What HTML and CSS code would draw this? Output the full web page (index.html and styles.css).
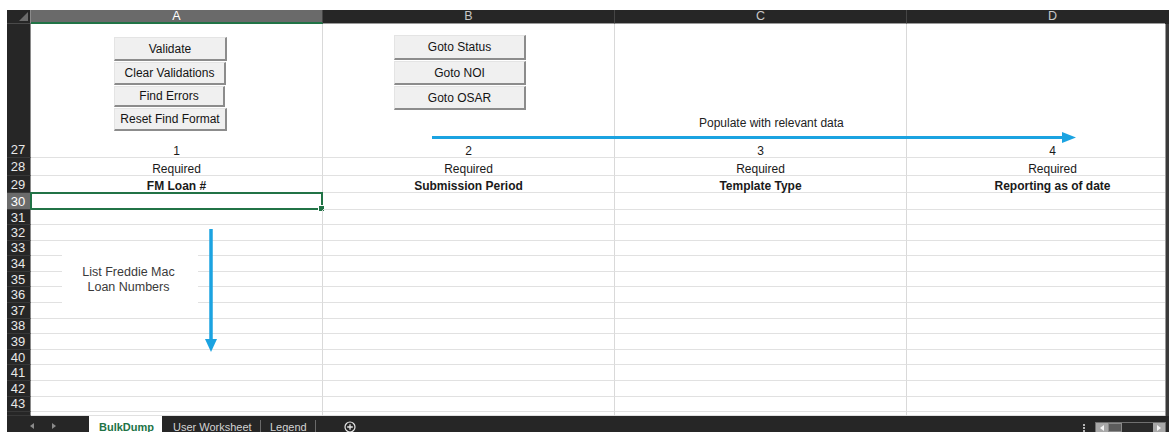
FILE: index.html
```html
<!DOCTYPE html>
<html lang="en">
<head>
<meta charset="utf-8">
<title>BulkDump</title>
<link rel="stylesheet" href="styles.css">
</head>
<body>
<div class="window">
  <div class="sheet">
    <div class="grid">
      <div class="row row-head">
        <div class="corner"><span class="corner-tri"></span></div>
        <div class="colhdr is-sel">A</div>
        <div class="colhdr">B</div>
        <div class="colhdr">C</div>
        <div class="colhdr">D</div>
      </div>

      <div class="row row-27">
        <div class="rowhdr rowhdr-tall">27</div>
        <div class="cell cell-tall">
          <div class="btn-stack stack-a">
            <button class="btn b-24 w-113">Validate</button>
            <button class="btn b-23 w-112">Clear Validations</button>
            <button class="btn b-21 w-111">Find Errors</button>
            <button class="btn b-23 w-113">Reset Find Format</button>
          </div>
          <span class="num">1</span>
        </div>
        <div class="cell cell-tall">
          <div class="btn-stack stack-b">
            <button class="btn b-25 w-132">Goto Status</button>
            <button class="btn b-24 w-132">Goto NOI</button>
            <button class="btn b-24 w-132">Goto OSAR</button>
          </div>
          <span class="num">2</span>
        </div>
        <div class="cell cell-tall"><span class="num">3</span></div>
        <div class="cell cell-tall"><span class="num">4</span></div>
      </div>

      <div class="row h18">
        <div class="rowhdr">28</div>
        <div class="cell">Required</div>
        <div class="cell">Required</div>
        <div class="cell">Required</div>
        <div class="cell">Required</div>
      </div>
      <div class="row h17">
        <div class="rowhdr">29</div>
        <div class="cell bold">FM Loan #</div>
        <div class="cell bold">Submission Period</div>
        <div class="cell bold">Template Type</div>
        <div class="cell bold">Reporting as of date</div>
      </div>
      <div class="row h17">
        <div class="rowhdr is-sel">30</div>
        <div class="cell active"></div>
        <div class="cell"></div>
        <div class="cell"></div>
        <div class="cell"></div>
      </div>
      <div class="row h15">
        <div class="rowhdr">31</div>
        <div class="cell"></div><div class="cell"></div><div class="cell"></div><div class="cell"></div>
      </div>
      <div class="row h156"><div class="rowhdr">32</div><div class="cell"></div><div class="cell"></div><div class="cell"></div><div class="cell"></div></div>
      <div class="row h156"><div class="rowhdr">33</div><div class="cell"></div><div class="cell"></div><div class="cell"></div><div class="cell"></div></div>
      <div class="row h156"><div class="rowhdr">34</div><div class="cell"></div><div class="cell"></div><div class="cell"></div><div class="cell"></div></div>
      <div class="row h156"><div class="rowhdr">35</div><div class="cell"></div><div class="cell"></div><div class="cell"></div><div class="cell"></div></div>
      <div class="row h156"><div class="rowhdr">36</div><div class="cell"></div><div class="cell"></div><div class="cell"></div><div class="cell"></div></div>
      <div class="row h156"><div class="rowhdr">37</div><div class="cell"></div><div class="cell"></div><div class="cell"></div><div class="cell"></div></div>
      <div class="row h156"><div class="rowhdr">38</div><div class="cell"></div><div class="cell"></div><div class="cell"></div><div class="cell"></div></div>
      <div class="row h156"><div class="rowhdr">39</div><div class="cell"></div><div class="cell"></div><div class="cell"></div><div class="cell"></div></div>
      <div class="row h156"><div class="rowhdr">40</div><div class="cell"></div><div class="cell"></div><div class="cell"></div><div class="cell"></div></div>
      <div class="row h156"><div class="rowhdr">41</div><div class="cell"></div><div class="cell"></div><div class="cell"></div><div class="cell"></div></div>
      <div class="row h156"><div class="rowhdr">42</div><div class="cell"></div><div class="cell"></div><div class="cell"></div><div class="cell"></div></div>
      <div class="row h156"><div class="rowhdr">43</div><div class="cell"></div><div class="cell"></div><div class="cell"></div><div class="cell"></div></div>
      <div class="row h-rest"><div class="rowhdr"></div><div class="cell"></div><div class="cell"></div><div class="cell"></div><div class="cell"></div></div>
    </div>
    <div class="vscroll"><div class="vscroll-track"></div></div>
  </div>

  <div class="tabbar">
    <div class="tab-nav">
      <span class="nav-l"></span>
      <span class="nav-r"></span>
    </div>
    <div class="tab tab-active">BulkDump</div>
    <div class="tab tab-ws">User Worksheet</div>
    <div class="tab tab-legend">Legend</div>
    <div class="tab-add">
      <svg width="12" height="12" viewBox="0 0 12 12"><circle cx="6" cy="6" r="5" fill="none" stroke="#e6e6e6" stroke-width="1.2"/><path d="M6 3.2v5.6M3.2 6h5.6" stroke="#e6e6e6" stroke-width="1.3"/></svg>
    </div>
    <div class="tab-right">
      <span class="dots"><i></i><i></i><i></i></span>
      <div class="hscroll">
        <span class="hs-btn hs-left"></span>
        <span class="hs-thumb"></span>
        <span class="hs-track"></span>
        <span class="hs-btn hs-right"></span>
      </div>
    </div>
  </div>

  <!-- floating shapes on the sheet -->
  <div class="note note-populate">Populate with relevant data</div>
  <div class="note note-list">List Freddie Mac<br>Loan Numbers</div>
  <svg class="shapes" width="1169" height="432" viewBox="0 0 1169 432">
    <line x1="432" y1="137.5" x2="1064" y2="137.5" stroke="#1ba3e1" stroke-width="3"/>
    <polygon points="1062,132 1076,137.5 1062,143" fill="#1ba3e1"/>
    <line x1="211" y1="229" x2="211" y2="341" stroke="#1ba3e1" stroke-width="3.5"/>
    <polygon points="205,339 217,339 211,352" fill="#1ba3e1"/>
  </svg>
</div>
</body>
</html>
```

FILE: styles.css
```css
* { box-sizing: border-box; margin: 0; padding: 0; }

html, body {
  width: 1169px;
  height: 432px;
  overflow: hidden;
  background: #ffffff;
}

body {
  font-family: "Liberation Sans", Arial, sans-serif;
  font-size: 12px;
  color: #1a1a1a;
}

.window {
  position: relative;
  height: 432px;
  padding: 10px 0 0 7px;
  display: flex;
  flex-direction: column;
}

/* ---------- sheet ---------- */
.sheet {
  display: flex;
  height: 406px;
  flex: none;
}

.grid {
  width: 1158px;
  display: flex;
  flex-direction: column;
  overflow: hidden;
}

.vscroll {
  width: 4px;
  background: #262626;
  display: flex;
  flex-direction: column;
}

.vscroll-track {
  margin-top: 14px;
  flex: 1;
  border-left: 1px solid #9a9a9a;
  background: #3a3a3a;
}

.row {
  display: grid;
  grid-template-columns: 24px 292px 292px 292px 292px;
  flex: none;
}

.row-head { height: 14px; }
.row-27 { height: 134px; }
.h18 { height: 18px; }
.h17 { height: 17px; }
.h15 { height: 15px; }
.h156 { height: 15.6px; }
.h-rest { flex: 1; }

/* headers */
.corner {
  position: relative;
  background: #262626;
  border-right: 1px solid #8a8a8a;
  border-bottom: 1px solid #4a4a4a;
}

.corner-tri {
  position: absolute;
  right: 2px;
  bottom: 2px;
  width: 0;
  height: 0;
  border-left: 9px solid transparent;
  border-bottom: 9px solid #6b6b6b;
}

.colhdr {
  background: #262626;
  color: #c8c8c8;
  text-align: center;
  line-height: 13px;
  font-size: 12.5px;
  border-right: 1px solid #454545;
  border-bottom: 1px solid #9a9a9a;
}

.colhdr.is-sel {
  background: #6a6a6a;
  color: #ffffff;
  border-bottom: 2px solid #217346;
  line-height: 12px;
}

.rowhdr {
  background: #262626;
  color: #e8e8e8;
  font-size: 13px;
  line-height: 13px;
  display: flex;
  align-items: center;
  justify-content: center;
  border-right: 1px solid #8a8a8a;
  border-bottom: 1px solid #383838;
  padding-right: 1px;
}

.rowhdr-tall {
  align-items: flex-end;
  padding-bottom: 1px;
}

.rowhdr.is-sel {
  background: #6b6b6b;
  color: #ffffff;
}

/* cells */
.cell {
  position: relative;
  display: flex;
  align-items: flex-end;
  justify-content: center;
  line-height: 12px;
  white-space: nowrap;
  border-right: 1px solid #d9d9d9;
  border-bottom: 1px solid #e1e1e1;
}

.cell.bold { font-weight: bold; }

.cell-tall {
  flex-direction: column;
  align-items: center;
  justify-content: flex-start;
}

.num {
  margin-top: auto;
}

.cell.active::before {
  content: "";
  position: absolute;
  left: -1px;
  top: -1px;
  right: -1px;
  bottom: -1px;
  border: 2px solid #217346;
}

.cell.active::after {
  content: "";
  position: absolute;
  right: -3px;
  bottom: -3px;
  width: 5px;
  height: 5px;
  background: #217346;
  border: 1px solid #ffffff;
}

/* form buttons */
.btn-stack {
  align-self: flex-start;
  display: flex;
  flex-direction: column;
  gap: 1px;
}

.stack-a { margin: 13px 0 0 83px; }
.stack-b { margin: 11px 0 0 71px; }

.btn {
  font-family: "Liberation Sans", Arial, sans-serif;
  font-size: 12px;
  color: #141414;
  background: #f0f0f0;
  border-top: 1px solid #e4e4e4;
  border-left: 1px solid #e4e4e4;
  border-right: 2px solid #8c8c8c;
  border-bottom: 2px solid #8c8c8c;
  text-align: center;
  padding: 0;
}

.b-21 { height: 21px; }
.b-23 { height: 23px; }
.b-24 { height: 24px; }
.b-25 { height: 25px; }
.w-111 { width: 111px; }
.w-112 { width: 112px; }
.w-113 { width: 113px; }
.w-132 { width: 132px; }

/* ---------- sheet tabs ---------- */
.tabbar {
  flex: 1;
  background: #262626;
  display: flex;
  align-items: stretch;
  font-size: 11px;
  color: #d4d4d4;
  overflow: hidden;
}

.tab-nav {
  width: 82px;
  display: flex;
  align-items: center;
  padding: 4px 0 0 23px;
  gap: 18px;
}

.nav-l, .nav-r {
  width: 0;
  height: 0;
  border-top: 3px solid transparent;
  border-bottom: 3px solid transparent;
}

.nav-l { border-right: 4px solid #8a8a8a; }
.nav-r { border-left: 4px solid #8a8a8a; }

.tab {
  line-height: 22px;
  white-space: nowrap;
}

.tab-active {
  width: 73px;
  background: #ffffff;
  color: #217346;
  font-weight: bold;
  padding-left: 10px;
}

.tab-ws {
  width: 99px;
  padding-left: 11px;
  display: flex;
  align-items: flex-start;
}

.tab-legend {
  width: 55px;
  padding-left: 9px;
  display: flex;
  align-items: flex-start;
}

.tab-ws::after, .tab-legend::after {
  content: "";
  margin: 4px 0 0 auto;
  width: 1px;
  height: 14px;
  background: #6a6a6a;
}

.tab-add {
  margin-left: 28px;
  padding-top: 5px;
  display: flex;
  align-items: flex-start;
}

.tab-right {
  margin-left: auto;
  display: flex;
  align-items: flex-end;
}

.dots {
  display: flex;
  flex-direction: column;
  gap: 1px;
  margin: 0 10px 0 0;
}

.dots i {
  display: block;
  width: 2px;
  height: 2px;
  background: #b5b5b5;
}

.hscroll {
  width: 71px;
  height: 10px;
  margin-right: 3px;
  display: flex;
  border: 1px solid #707070;
  border-bottom: none;
  background: #2b2b2b;
}

.hs-btn {
  width: 12px;
  background: #a8a8a8;
  display: flex;
  align-items: center;
  justify-content: center;
}

.hs-left::before, .hs-right::before {
  content: "";
  width: 0;
  height: 0;
  border-top: 3px solid transparent;
  border-bottom: 3px solid transparent;
}

.hs-left::before { border-right: 4px solid #f5f5f5; }
.hs-right::before { border-left: 4px solid #f5f5f5; }

.hs-thumb {
  width: 14px;
  background: #5c5c5c;
  border: 1px solid #8a8a8a;
}

.hs-track { flex: 1; }

/* ---------- floating shapes ---------- */
.note {
  position: absolute;
  font-size: 12px;
  line-height: 14px;
  color: #222222;
  white-space: nowrap;
}

.note-populate {
  left: 699px;
  top: 116px;
}

.note-list {
  left: 62px;
  top: 248px;
  width: 136px;
  height: 62px;
  background: #ffffff;
  text-align: center;
  font-size: 12.5px;
  line-height: 15px;
  padding-top: 17px;
  padding-right: 3px;
  color: #3a3a3a;
}

.shapes {
  position: absolute;
  left: 0;
  top: 0;
  pointer-events: none;
}
```
